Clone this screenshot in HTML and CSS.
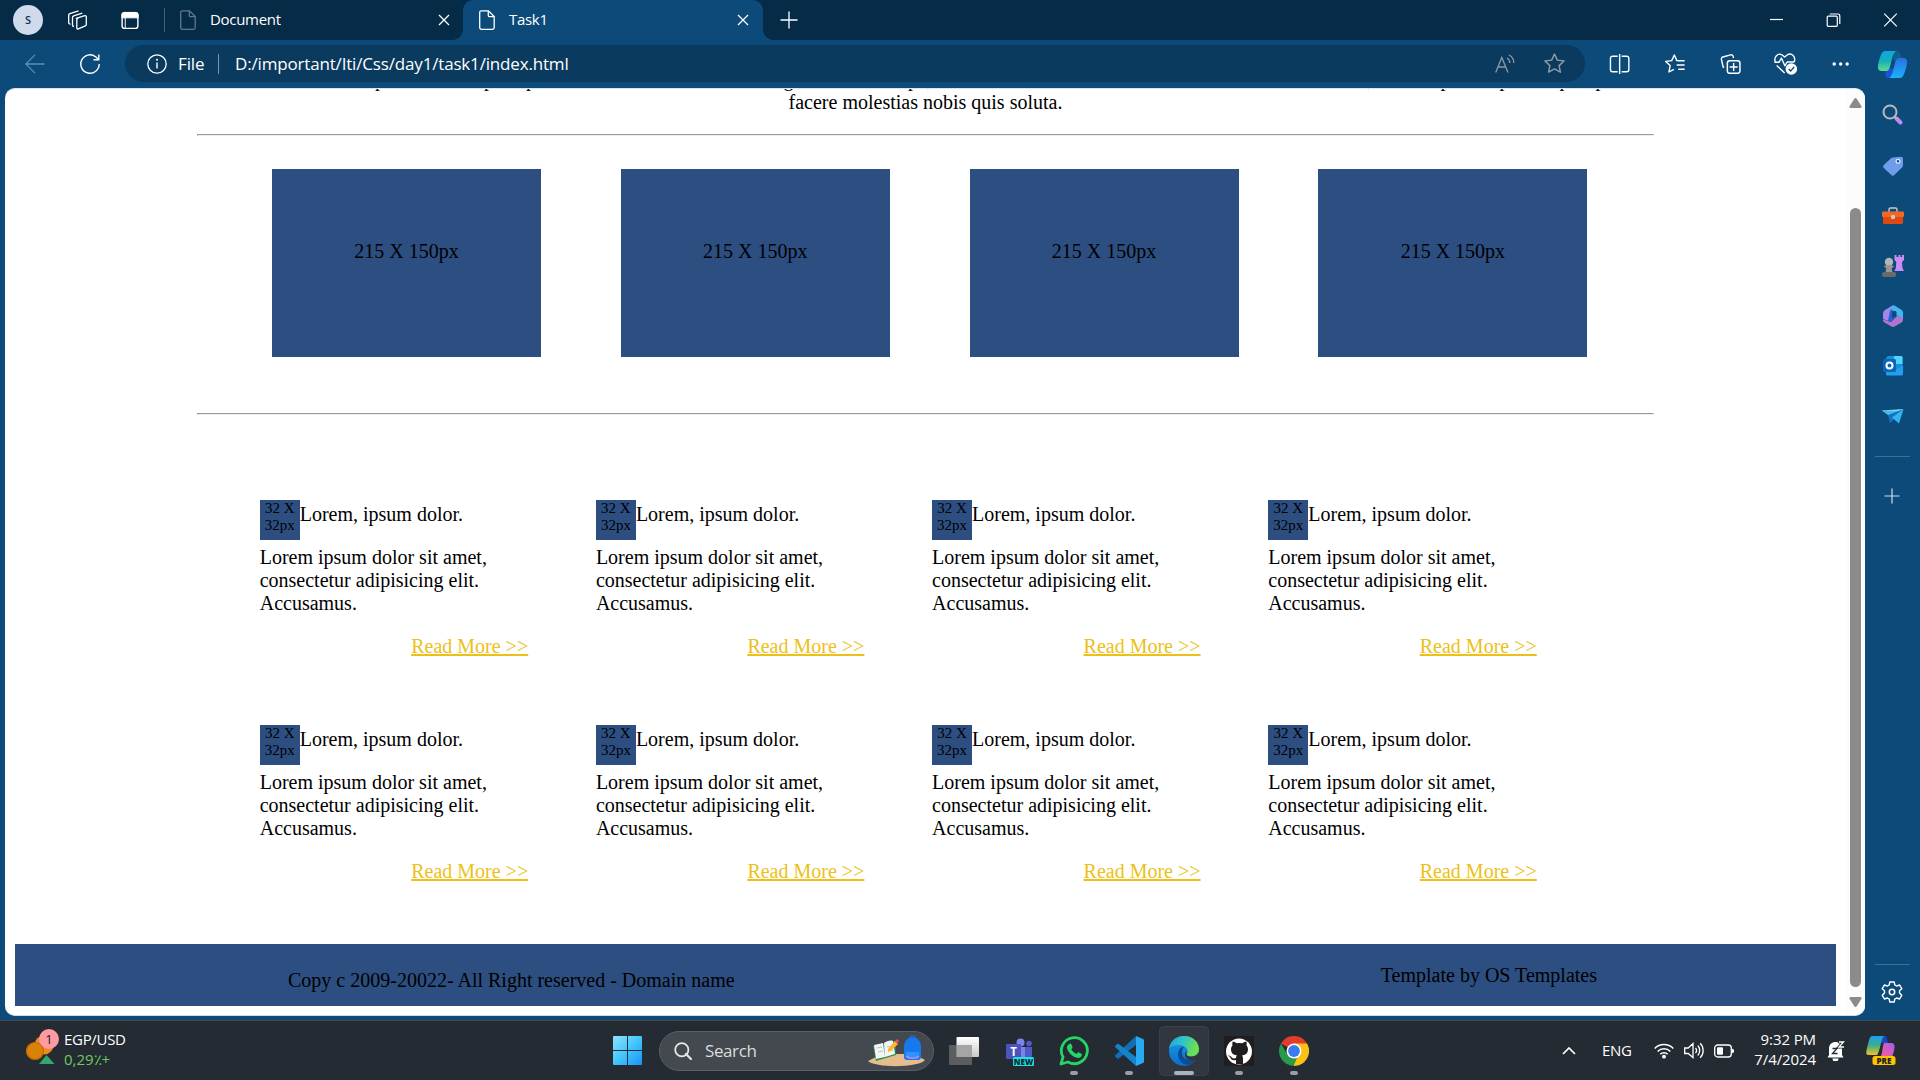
FILE: index.html
```html
<!DOCTYPE html>
<html lang="en">
<head>
<meta charset="utf-8">
<title>Task1</title>
<link rel="stylesheet" href="styles.css">
</head>
<body>
<svg class="defs" width="0" height="0">
  <defs>
    <linearGradient id="cpA" x1="0" y1="0" x2="0" y2="1"><stop offset="0" stop-color="#12a5e6"/><stop offset=".5" stop-color="#15b0b8"/><stop offset="1" stop-color="#5fdc8a"/></linearGradient>
    <linearGradient id="cpB" x1="0" y1="0" x2="0" y2="1"><stop offset="0" stop-color="#2b6fe0"/><stop offset="1" stop-color="#19b4fa"/></linearGradient>
    <linearGradient id="preA" x1="0" y1="0" x2="0" y2="1"><stop offset="0" stop-color="#1b9df0"/><stop offset=".5" stop-color="#3fae8a"/><stop offset="1" stop-color="#f2c220"/></linearGradient>
    <linearGradient id="preB" x1="1" y1="0" x2="0" y2="1"><stop offset="0" stop-color="#a45cf0"/><stop offset="1" stop-color="#ff5f8c"/></linearGradient>
    <linearGradient id="win" x1="0" y1="0" x2="1" y2="1"><stop offset="0" stop-color="#8fe3ff"/><stop offset=".5" stop-color="#44c6fb"/><stop offset="1" stop-color="#1793f8"/></linearGradient>
    <linearGradient id="edA" x1="0" y1="0" x2="1" y2=".3"><stop offset="0" stop-color="#1fa2e0"/><stop offset=".5" stop-color="#31c3c8"/><stop offset="1" stop-color="#6fe04c"/></linearGradient>
    <linearGradient id="edB" x1="0" y1="0" x2="0" y2="1"><stop offset="0" stop-color="#1b9de2"/><stop offset="1" stop-color="#0a6fce"/></linearGradient>
    <linearGradient id="tv" x1="0" y1="0" x2="0" y2="1"><stop offset="0" stop-color="#fff"/><stop offset="1" stop-color="#c9c9c9"/></linearGradient>
    <symbol id="doc" viewBox="0 0 16 20"><path d="M2.5.8h7l5.7 5.7v11a1.8 1.8 0 0 1-1.8 1.8H2.5a1.8 1.8 0 0 1-1.8-1.8V2.6A1.8 1.8 0 0 1 2.500.8zM9.300.8v4.600a1.200 1.200 0 0 0 1.200 1.200h4.500" fill="none" stroke="currentColor" stroke-width="1.300"/></symbol>
    <symbol id="x" viewBox="0 0 12 12"><path d="M1 1l10 10M11 1L1 11" stroke="currentColor" stroke-width="1.300" fill="none"/></symbol>
  </defs>
</svg>

<header class="titlebar">
  <span class="avatar">S</span>
  <svg class="workspaces" viewBox="0 0 20 20"><g fill="none" stroke="currentColor" stroke-width="1.300" stroke-linejoin="round"><path d="M8.800 8.300l8.400-2.600a1.200 1.200 0 0 1 1.600 1.100v7.700a1.500 1.500 0 0 1-1 1.400l-7 3a1 1 0 0 1-1.500-.9V9.800a1.500 1.500 0 0 1 1-1.400z"/><path d="M6.500 16.500a1.500 1.500 0 0 1-1.500-1.400V7.600a1.800 1.800 0 0 1 1.200-1.700l8.600-2.700"/><path d="M3 14a1.500 1.500 0 0 1-1.800-1.400V5.300a1.800 1.800 0 0 1 1.200-1.700L11 .9"/></g></svg>
  <svg class="tabmenu" viewBox="0 0 20 20"><rect x="1.700" y="1.700" width="16.600" height="16.600" rx="2.500" fill="none" stroke="#fff" stroke-width="1.500"/><path d="M1.500 7.200V4a2.500 2.500 0 0 1 2.500-2.500h12A2.500 2.500 0 0 1 18.500 4v3.200zM5 7v11" fill="#fff" stroke="#fff"/></svg>
  <span class="split"></span>
  <div class="tab"><svg class="doc dim"><use href="#doc"/></svg><span class="tab-name">Document</span><svg class="x"><use href="#x"/></svg></div>
  <div class="tab active"><svg class="doc"><use href="#doc"/></svg><span class="tab-name">Task1</span><svg class="x"><use href="#x"/></svg></div>
  <svg class="newtab" viewBox="0 0 18 18"><path d="M9 .5v17M.5 9h17" stroke="#fff" stroke-width="1.300"/></svg>
  <div class="winbtns">
    <svg viewBox="0 0 14 14"><path d="M.5 6.500h13" stroke="#fff" stroke-width="1.200"/></svg>
    <svg viewBox="0 0 14 14"><path d="M.7 4.200a1 1 0 0 1 1-1h8.100a1 1 0 0 1 1 1v8.100a1 1 0 0 1-1 1H1.700a1 1 0 0 1-1-1zM3.300 1h8.200a1.800 1.800 0 0 1 1.800 1.800V11" fill="none" stroke="#fff" stroke-width="1.200"/></svg>
    <svg viewBox="0 0 14 14"><path d="M.7.700l12.600 12.600M13.300.700L.7 13.300" stroke="#fff" stroke-width="1.200"/></svg>
  </div>
</header>

<nav class="toolbar">
  <svg class="back" viewBox="0 0 20 20"><path d="M19.500 10H.8M10 .9L.8 10l9.200 9.100" fill="none" stroke="#5f8fb5" stroke-width="1.300"/></svg>
  <svg class="reload" viewBox="0 0 20 20"><path d="M19.200 10A9.200 9.200 0 1 1 15.600 2.700L18.700 5.500M18.800.5v5.200h-5.300" fill="none" stroke="#fff" stroke-width="1.400"/></svg>
  <div class="address">
    <svg class="info" viewBox="0 0 20 20"><circle cx="10" cy="10" r="9.200" fill="none" stroke="#fff" stroke-width="1.300"/><path d="M10 8.500v6" stroke="#fff" stroke-width="1.400"/><circle cx="10" cy="5.800" r="1" fill="#fff"/></svg>
    <span class="scheme">File</span>
    <span class="bar"></span>
    <span class="url">D:/important/Iti/Css/day1/task1/index.html</span>
    <svg class="aloud" viewBox="0 0 20 20"><path d="M.7 18.500L6.800 3.500l6.200 15M3 13h7.800M12 4c1.800 1 2.800 2.800 2.800 5M14 1c3 1.600 4.800 4.500 4.800 8" fill="none" stroke="#8d9aa5" stroke-width="1.300"/></svg>
    <svg class="star" viewBox="0 0 20 20"><path d="M10 1l2.700 5.800 6.400.8-4.700 4.400 1.200 6.300L10 15.200l-5.600 3.100 1.200-6.300L.9 7.600l6.400-.8z" fill="none" stroke="#8d9aa5" stroke-width="1.400" stroke-linejoin="round"/></svg>
  </div>
  <div class="tools">
    <svg viewBox="0 0 20 20"><path d="M8 2.200H3A2.200 2.200 0 0 0 .8 4.400v11.200A2.200 2.200 0 0 0 3 17.800h5M12 2.200h5a2.200 2.200 0 0 1 2.200 2.200v11.200a2.200 2.200 0 0 1-2.200 2.200h-5M10 0v20" fill="none" stroke="#fff" stroke-width="1.400"/></svg>
    <svg viewBox="0 0 20 20"><path d="M14 6.800l-1.800-.2L9.700 1 7 6.600l-6 .8 4.500 4.200L4.300 18l5-2.700M13 6.800h7M12 11h8M13.500 15.200H20" fill="none" stroke="#fff" stroke-width="1.400" stroke-linejoin="round"/></svg>
    <svg viewBox="0 0 20 20"><path d="M3.500 13.500l-1-.5L.8 5.500A2 2 0 0 1 2.200 3L10 .9a2 2 0 0 1 2.500 1.500l.4 1.600" fill="none" stroke="#fff" stroke-width="1.400"/><rect x="6.700" y="6.700" width="12.600" height="12.600" rx="2.300" fill="none" stroke="#fff" stroke-width="1.500"/><path d="M13 9v8M9 13h8" stroke="#fff" stroke-width="1.400"/></svg>
    <svg class="heart" viewBox="0 0 24 22"><path d="M1.800 9.500C-.5 4 4.500-.6 8.500 2l2.500 2 2.500-2C18-.8 22.500 3.800 20.500 9M3 12.500l8 7.500M.8 9.200h4.700L7.800 5l3.400 7.800 2.300-3.800h7" fill="none" stroke="#fff" stroke-width="1.400" stroke-linejoin="round"/><circle cx="17.700" cy="16" r="5.800" fill="#fff"/><path d="M15 16l2 2 3.500-4" fill="none" stroke="#0c4a7a" stroke-width="1.300"/></svg>
    <svg viewBox="0 0 20 20"><g fill="#fff"><circle cx="3.500" cy="10" r="1.700"/><circle cx="10" cy="10" r="1.700"/><circle cx="16.500" cy="10" r="1.700"/></g></svg>
  </div>
  <svg class="copilot" viewBox="0 0 30 28"><path d="M16 1h4c2 0 3 3 4 7l-8 3z" fill="#0d628c"/><path d="M8 18l9 1-2 5c-1 3-2 4-4 4-3 0-4-5-3-10z" fill="#1c52d6"/><path d="M8 1h10.500c-3.500 2-4 9-5.500 14-1 4-2 6-4.500 6H4.500C-1 21 0 16 2 9 4 3 5 1 8 1z" fill="url(#cpA)"/><path d="M22 28H11.500c3.500-2 4-8 5.500-13 1-4 2-7 4.500-7h4c5.500 0 4.500 5 2.500 12-2 6-3 8-6 8z" fill="url(#cpB)"/></svg>
</nav>

<div class="workspace">
  <div class="viewport">
    <main class="page">
      <div class="cutline"><span>perferendis</span><span>ipsa</span><span>optio</span><span>magni</span><span>culpa,</span><span>rerum,</span><span>ipsa</span><span>porro</span><span>optio</span><span>porro</span></div>
      <p class="intro">facere molestias nobis quis soluta.</p>
      <hr>
      <section class="gallery">
        <div class="box">215 X 150px</div><div class="box">215 X 150px</div><div class="box">215 X 150px</div><div class="box">215 X 150px</div>
      </section>
      <hr>
      <section class="cards">
        <article class="card"><div class="card-head"><span class="thumb">32 X 32px</span><span>Lorem, ipsum dolor.</span></div><p>Lorem ipsum dolor sit amet, consectetur adipisicing elit. Accusamus.</p><a class="more">Read More &gt;&gt;</a></article>
        <article class="card"><div class="card-head"><span class="thumb">32 X 32px</span><span>Lorem, ipsum dolor.</span></div><p>Lorem ipsum dolor sit amet, consectetur adipisicing elit. Accusamus.</p><a class="more">Read More &gt;&gt;</a></article>
        <article class="card"><div class="card-head"><span class="thumb">32 X 32px</span><span>Lorem, ipsum dolor.</span></div><p>Lorem ipsum dolor sit amet, consectetur adipisicing elit. Accusamus.</p><a class="more">Read More &gt;&gt;</a></article>
        <article class="card"><div class="card-head"><span class="thumb">32 X 32px</span><span>Lorem, ipsum dolor.</span></div><p>Lorem ipsum dolor sit amet, consectetur adipisicing elit. Accusamus.</p><a class="more">Read More &gt;&gt;</a></article>
        <article class="card"><div class="card-head"><span class="thumb">32 X 32px</span><span>Lorem, ipsum dolor.</span></div><p>Lorem ipsum dolor sit amet, consectetur adipisicing elit. Accusamus.</p><a class="more">Read More &gt;&gt;</a></article>
        <article class="card"><div class="card-head"><span class="thumb">32 X 32px</span><span>Lorem, ipsum dolor.</span></div><p>Lorem ipsum dolor sit amet, consectetur adipisicing elit. Accusamus.</p><a class="more">Read More &gt;&gt;</a></article>
        <article class="card"><div class="card-head"><span class="thumb">32 X 32px</span><span>Lorem, ipsum dolor.</span></div><p>Lorem ipsum dolor sit amet, consectetur adipisicing elit. Accusamus.</p><a class="more">Read More &gt;&gt;</a></article>
        <article class="card"><div class="card-head"><span class="thumb">32 X 32px</span><span>Lorem, ipsum dolor.</span></div><p>Lorem ipsum dolor sit amet, consectetur adipisicing elit. Accusamus.</p><a class="more">Read More &gt;&gt;</a></article>
      </section>
      <footer class="footer"><span class="copy">Copy c 2009-20022- All Right reserved - Domain name</span><span class="tpl">Template by OS Templates</span></footer>
    </main>
    <div class="scroll">
      <svg viewBox="0 0 13 10"><path d="M5.300.8a1.400 1.400 0 0 1 2.400 0l4.600 7.200a1.200 1.200 0 0 1-1 2H1.700a1.200 1.200 0 0 1-1-2z" fill="#8b8b8b"/></svg>
      <span class="handle"></span>
      <svg viewBox="0 0 13 10"><path d="M5.300 9.200a1.400 1.400 0 0 0 2.400 0l4.600-7.200a1.200 1.200 0 0 0-1-2H1.700a1.200 1.200 0 0 0-1 2z" fill="#8b8b8b"/></svg>
    </div>
  </div>
  <aside class="side">
    <svg class="find" viewBox="0 0 22 22"><path d="M14.500 14.500l4 4" stroke="#c58af0" stroke-width="4" stroke-linecap="round"/><circle cx="8" cy="8" r="6.500" fill="none" stroke="#b9b9b9" stroke-width="2"/><path d="M12.500 12.500l2 2" stroke="#b9b9b9" stroke-width="2"/></svg>
    <svg viewBox="0 0 22 22"><path d="M11 2.500l8-.8a2 2 0 0 1 2 2v6.800a3 3 0 0 1-1 2l-7.500 7.300a2.500 2.500 0 0 1-3.500 0L1.800 13a2 2 0 0 1 0-3L9 3.300a3 3 0 0 1 2-.8z" fill="#6f9ceb"/><circle cx="16" cy="6.300" r="1.900" fill="#134b86" stroke="#d3ecff" stroke-width="1.200"/></svg>
    <svg viewBox="0 0 22 22"><path d="M7 7V4.500A1.500 1.500 0 0 1 8.500 3h5A1.500 1.500 0 0 1 15 4.500V7" fill="none" stroke="#c9c9c9" stroke-width="1.400"/><rect x="1" y="10" width="20" height="9" rx="1.500" fill="#e0480f"/><rect x="0" y="6.500" width="22" height="5.500" rx="1" fill="#f26722"/><circle cx="11" cy="12" r="2.200" fill="#c9c9c9"/></svg>
    <svg viewBox="0 0 22 22"><path d="M12.500 0h2v2h2V0h2v2h1.500V0h2v5l-2 2 .5 6 1.500 3h-9.500l1.300-3 .5-6-1.800-2z" fill="#c78df2"/><circle cx="7" cy="7" r="4.200" fill="#b5b5b5"/><path d="M2 11.500c0-2 10-2 10 0-1 1-2 1-2.300 2l.8 4h-7l.8-4C4 12.500 3 12.500 2 11.500z" fill="#979797"/><rect x="0" y="17" width="14" height="5" rx="2" fill="#6c6a68"/></svg>
    <svg viewBox="0 0 22 22"><path d="M10 .8L3 5a4 4 0 0 0-2 3.500V14l7 2.500V7.500L12 5V.8z" fill="#a585ea"/><path d="M10 .8a3 3 0 0 1 3 0L19 4.500a3.500 3.500 0 0 1 2 3V14l-6.500-3.500V7L8 4z" fill="#43b4ee"/><path d="M21 13v2a3 3 0 0 1-1.500 2.500L13 21.300a4 4 0 0 1-4 0L2.500 17.500A3 3 0 0 1 1 14.500L9 17l6-6z" fill="#b174cf"/><path d="M8 5.500l2-1.500v9l4.500-2.500L9 17l-3-1z" fill="#2c5fd0"/><path d="M10 7.500l4-1.500v5L10 13z" fill="#0c4a7a"/></svg>
    <svg viewBox="0 0 22 22"><path d="M6 1h13a1.500 1.500 0 0 1 1.500 1.500V12L14 16 4 12V3z" fill="#1490df"/><path d="M12 1h7a1.500 1.500 0 0 1 1.500 1.500V9H12z" fill="#4fd3fa"/><path d="M4 12l10 3 7-5v9a1.500 1.500 0 0 1-1.500 1.500h-14A1.500 1.500 0 0 1 4 19z" fill="#1f9fec"/><rect x="1" y="4" width="13" height="13" rx="1.500" fill="#0b65b8"/><circle cx="7.500" cy="10.500" r="3" fill="none" stroke="#fff" stroke-width="2"/></svg>
    <svg viewBox="0 0 22 22"><path d="M0 5.500L21.500 4 9 12z" fill="#7cdcfb"/><path d="M0 5.500L17 6l-9 5z" fill="#43b9ee"/><path d="M6 10l15.500-6L8 18.500z" fill="#1574c0"/><path d="M21.500 4L10 12.500 17 18.500z" fill="#34b3ee"/></svg>
    <span class="rule"></span>
    <svg class="add" viewBox="0 0 16 16"><path d="M8 .5v15M.5 8h15" stroke="#cfdce7" stroke-width="1.200"/></svg>
    <span class="rule low"></span>
    <svg class="gear" viewBox="0 0 22 22"><path d="M8.800 1h4.400l.6 3 1.800 1 3-1 2.200 3.700-2.300 2.100v2.300l2.300 2.100-2.200 3.800-3-1-1.800 1-.6 3H8.800l-.6-3-1.800-1-3 1-2.200-3.800 2.300-2.100V9.800L1.200 7.700 3.400 4l3 1 1.800-1z" fill="none" stroke="#fff" stroke-width="1.400" stroke-linejoin="round"/><circle cx="11" cy="11" r="2.700" fill="none" stroke="#fff" stroke-width="1.500"/></svg>
  </aside>
</div>

<div class="taskbar">
  <svg class="coins" viewBox="0 0 33 36"><circle cx="18" cy="16" r="9.500" fill="#f08a1c"/><circle cx="9" cy="22" r="8.500" fill="#d98207" stroke="#c56505" stroke-width="1.200"/><path d="M20.500 26l8 9h-15.500z" fill="#34a56b"/><circle cx="23" cy="10" r="10" fill="#ff9aa2"/><text x="23" y="14.500" text-anchor="middle" font-size="13" fill="#222">1</text></svg>
  <div class="rate"><span>EGP/USD</span><span class="up">0,29٪+</span></div>
  <svg class="start" viewBox="0 0 29 29"><path d="M0 1a1 1 0 0 1 1-1h13v14H0zM15 0h13a1 1 0 0 1 1 1v13H15zM0 15h14v14H1a1 1 0 0 1-1-1zM15 15h14v13a1 1 0 0 1-1 1H15z" fill="url(#win)"/></svg>
  <div class="search">
    <svg class="glass" viewBox="0 0 18 18"><path d="M12 12l5 5" stroke="#e6e6e6" stroke-width="2.200" stroke-linecap="round"/><circle cx="7.800" cy="7.800" r="6.600" fill="none" stroke="#e6e6e6" stroke-width="1.800"/></svg>
    <span>Search</span>
    <svg class="art" viewBox="0 0 57 32"><path d="M0 26l14-7h32l11 6c-6 8-50 8-57 1z" fill="#e5bd8c"/><path d="M5 11l22-5 1 14-20 6z" fill="#2f8f56"/><path d="M6 10l9-2 2 14-9 2zM16 8c3-2 6-3 9-2l2 13-10 3z" fill="#f4f4f4"/><path d="M9 13l5-1M10 17l5-1M19 12l5-1M20 16l5-1" stroke="#b3c9b8"/><path d="M20 14l7-8 3 3-7 7-3 1z" fill="#ffb62c"/><path d="M27 6l2-2 2 2-2 3z" fill="#ef5350"/><path d="M42 3c0-3 5-3 5 0" fill="none" stroke="#1668c9" stroke-width="1.500"/><path d="M36 12c0-13 17-13 17 0v10a3 3 0 0 1-3 3H39a3 3 0 0 1-3-3z" fill="#1679ee"/><path d="M38 17h13v4a3 3 0 0 1-3 3h-7a3 3 0 0 1-3-3z" fill="#3192ff"/><path d="M38 21c3 3 10 3 13 0" fill="none" stroke="#c48bf2" stroke-width="1.500"/></svg>
  </div>
  <div class="apps">
    <span class="app"><svg viewBox="0 0 30 30"><rect x="7.500" y="1" width="22.500" height="20" rx="1" fill="url(#tv)"/><rect x="0" y="9" width="23" height="20" rx="1" fill="#6a6a6a" fill-opacity=".8"/><rect x="7.500" y="9" width="15.500" height="12" fill="#a5a5a5"/></svg></span>
    <span class="app teams"><svg viewBox="0 0 30 30"><circle cx="15.500" cy="6.500" r="4" fill="#7b83eb"/><circle cx="24" cy="7.500" r="2.800" fill="#5059c9"/><path d="M9 11h13v14c-7 3-13 0-13-5z" fill="#7b83eb"/><path d="M20 11h7v8c0 3-3 4-7 3z" fill="#5059c9"/><rect x="1" y="8" width="15" height="15" rx="1.200" fill="#4b53bc"/><text x="8.500" y="19.500" text-anchor="middle" font-size="11.500" font-weight="700" fill="#fff">T</text><rect x="8" y="21" width="21" height="9" rx="1.500" fill="#21e0e4"/><text x="18.500" y="28.500" text-anchor="middle" font-size="8" font-weight="800" fill="#08272b">NEW</text></svg></span>
    <span class="app run"><svg viewBox="0 0 30 30"><path d="M2 28l2-7A13 13 0 1 1 9 26z" fill="none" stroke="#25d366" stroke-width="2.800" stroke-linejoin="round"/><path d="M10 8c1-1 2-.5 2.500.5l1 2.500c.2.800-.8 1.700-1.200 2.300 1.200 2.300 3 3.700 5.200 4.600.6-.6 1.300-1.900 2-1.700l3 1.500c.8.400.5 2.500-1 3.500-2 1.400-5 .5-8-1.500-3-2.200-5.500-5.500-5.500-8 0-1.500.8-2.900 2-3.700z" fill="#25d366"/></svg></span>
    <span class="app run"><svg viewBox="0 0 30 30"><path d="M22 0v9L4 23l-3-2.500v-1z" fill="#1070b3"/><path d="M1 10l3-2.500L22 21v9L1 11z" fill="#1583cc"/><path d="M22 0l7 3a2 2 0 0 1 1 1.500v21a2 2 0 0 1-1 1.500l-7 3z" fill="#29a9f2"/></svg></span>
    <span class="app run current"><svg viewBox="0 0 30 30"><circle cx="15" cy="15" r="15" fill="url(#edB)"/><path d="M0 13C1 5 7 0 15 0c9 0 15 6 15 13 0 5-4 7.500-8 7.500-3 0-5-1.200-4.300-2.500C21 14 16 9 10.500 9 5 9 1 11 0 13z" fill="url(#edA)"/><path d="M13 11c-6 3-5 14 2 17 5 2 10-1 13-5-5 3-15 1-15-6 0-2 0-4 2-6z" fill="#0f4a94"/><path d="M17.500 17.500c-.8 1.500 1.500 3 4.500 3 3.500 0 6.500-1.500 8-4.500v7l-2.500 1c-6 2-11.500-1-11.500-5.500 0-1.500.5-2.500 1.800-3z" fill="#32373f"/></svg></span>
    <span class="app run"><svg viewBox="0 0 30 30"><path d="M0 0h30v30H0z" fill="#211c1d"/><circle cx="15" cy="15.500" r="13" fill="#fff"/><path d="M12 28v-4c-4 1-5-1-6-3l-2-1.500c2-.5 3 1 4 2 1 1.500 3 1 4 .5 0-1 .5-2 1-2.500-4-.5-6-2.500-6-6 0-2 .5-3 1.500-4-.3-1-.3-3 .3-4 1 0 3 1 4 1.700a13 13 0 0 1 5.500 0c1-.7 3-1.700 4-1.700.5 1 .5 3 .2 4 1 1 1.500 2.500 1.500 4 0 3.500-2 5.500-6 6 .7.700 1 2 1 3v5.500z" fill="#211c1d"/></svg></span>
    <span class="app run"><svg viewBox="0 0 30 30"><path d="M15 15L2 7.500A15 15 0 0 1 28 7.500z" fill="#e33b2e"/><path d="M15 7.500h13A15 15 0 0 1 15 30z" fill="#fbc116"/><path d="M2 7.500l6.500 11.200L15 22l3 0-3.500 8A15 15 0 0 1 2 7.500z" fill="#289a4a"/><circle cx="15" cy="15" r="7.500" fill="#fff"/><circle cx="15" cy="15" r="5.900" fill="#3a7cf0"/></svg></span>
  </div>
  <div class="tray">
    <svg class="chev" viewBox="0 0 14 8"><path d="M1 7l6-6 6 6" fill="none" stroke="#fff" stroke-width="1.700"/></svg>
    <span class="lang">ENG</span>
    <svg class="net" viewBox="0 0 20 17"><path d="M.7 6.500a13 13 0 0 1 18.600 0M3.600 9.500a9 9 0 0 1 12.800 0M6.300 12.200a5.200 5.200 0 0 1 7.400 0" fill="none" stroke="#fff" stroke-width="1.500"/><circle cx="10" cy="14.700" r="1.900" fill="#fff"/></svg>
    <svg class="vol" viewBox="0 0 20 17"><path d="M.7 6h3.500L9 1.500v14L4.200 11.500H.7zM11.500 6a4 4 0 0 1 0 5.200M13.800 3.500a7.500 7.500 0 0 1 0 10M16.200 1.200a10.500 10.500 0 0 1 0 14.600" fill="none" stroke="#fff" stroke-width="1.300"/></svg>
    <svg class="bat" viewBox="0 0 20 14"><rect x=".7" y="1" width="16.600" height="12" rx="3" fill="none" stroke="#fff" stroke-width="1.300"/><rect x="3" y="3.300" width="6" height="7.400" rx="1" fill="#fff"/><path d="M18 5l2 1v2l-2 1z" fill="#fff" stroke="#fff" stroke-width=".5"/></svg>
    <div class="clock"><span>9:32 PM</span><span>7/4/2024</span></div>
    <svg class="bell" viewBox="0 0 18 20"><path d="M2 14V8C2 3 5 1 8.500 1S15 3 15 8v6l1.500 2.500H.5zM5.500 17.500h6a3 3 0 0 1-6 0z" fill="#fff"/><path d="M5.500 7.500h4.500l-4.500 5h5" stroke="#242b33" fill="none" stroke-width="1.300"/><path d="M11.500 1h5l-4.500 5h5" fill="none" stroke="#242b33" stroke-width="3"/><path d="M12 1h4.500L12 6h5" fill="none" stroke="#fff" stroke-width="1.300"/></svg>
    <svg class="pre" viewBox="0 0 30 29"><path d="M14 0h5c2 0 2 3 3 7h-7z" fill="#1b43c8"/><path d="M7 0h11c-3 2-4 16-7 19H3c-4 0-3-3-1-11C4 1 4 0 7 0z" fill="url(#preA)"/><path d="M18 7h7c4 0 4 3 3 8l-2 6H14c3-2 2-11 4-14z" fill="url(#preB)"/><rect x="6.500" y="20" width="23" height="9" rx="2.500" fill="#fdc500"/><text x="18" y="27.500" text-anchor="middle" font-size="8" font-weight="800" fill="#222">PRE</text></svg>
  </div>
</div>
</body>
</html>
```
FILE: styles.css
```css
* { box-sizing: border-box; }
body {
  margin: 0;
  width: 1920px;
  height: 1080px;
  overflow: hidden;
  display: flex;
  flex-direction: column;
  background: #0c4a7a;
  color: #fff;
  font-family: "Open Sans", "Noto Sans", sans-serif;
}
svg { display: block; flex: none; }
.defs { position: absolute; }

/* title bar */
.titlebar {
  height: 40px;
  flex: none;
  display: flex;
  align-items: center;
  padding-left: 13px;
  background: #062b47;
}
.avatar {
  width: 30px;
  height: 30px;
  border-radius: 50%;
  background: #cfdbec;
  color: #16304f;
  font-size: 11px;
  font-weight: 600;
  line-height: 30px;
  text-align: center;
}
.workspaces { width: 21px; height: 20px; margin-left: 24px; }
.tabmenu { width: 20px; height: 19px; margin-left: 32px; }
.split { width: 1px; height: 24px; margin-left: 24px; background: #44617a; }
.tab {
  width: 298px;
  height: 40px;
  display: flex;
  align-items: center;
  padding: 0 13px 0 15px;
  font-size: 15px;
}
.tab.active {
  width: 300px;
  padding: 0 14px 0 16px;
  background: #0c4a7a;
  border-radius: 10px 10px 0 0;
  position: relative;
}
.tab.active::before, .tab.active::after {
  content: "";
  position: absolute;
  bottom: 0;
  width: 10px;
  height: 10px;
}
.tab.active::before { left: -10px; background: radial-gradient(circle at 0 0, #062b47 9.5px, #0c4a7a 10px); }
.tab.active::after { right: -10px; background: radial-gradient(circle at 100% 0, #062b47 9.5px, #0c4a7a 10px); }
.doc { width: 16px; height: 20px; margin-right: 14px; }
.dim { color: #60788d; }
.tab-name { flex: 1; letter-spacing: -0.3px; line-height: 38px; height: 40px; }
.x { width: 12px; height: 12px; }
.newtab { width: 18px; height: 18px; margin-left: 17px; }
.winbtns { margin: 0 1px 0 auto; display: flex; }
.winbtns svg { width: 57px; height: 14px; }

/* toolbar */
.toolbar {
  height: 48px;
  flex: none;
  display: flex;
  align-items: center;
  padding: 0 0 1px 25px;
}
.back { width: 20px; height: 20px; }
.reload { width: 20px; height: 20px; margin-left: 35px; }
.address {
  width: 1460px;
  height: 37px;
  margin-left: 25px;
  display: flex;
  align-items: center;
  padding: 0 20px 0 22px;
  border-radius: 19px;
  background: #0a3a5e;
  font-size: 17px;
}
.info { width: 20px; height: 20px; margin-right: 11px; }
.scheme { width: 40px; letter-spacing: -0.1px; }
.bar { width: 1px; height: 20px; background: #7d96aa; margin-right: 16px; }
.url { flex: 1; letter-spacing: -0.17px; }
.aloud { width: 20px; height: 20px; }
.star { width: 21px; height: 21px; margin-left: 29px; }
.tools { display: flex; align-items: center; margin-left: 7px; }
.tools svg { width: 55.3px; height: 20px; }
.tools .heart { height: 22px; }
.copilot { width: 31px; height: 28px; margin-left: 9px; }

/* browser body */
.workspace { flex: 1; display: flex; padding-left: 5px; }
.viewport {
  width: 1860px;
  height: 928px;
  display: flex;
  background: #fff;
  border-radius: 10px;
  overflow: hidden;
  border-top: 1px solid #dbe5ee;
  border-bottom: 1px solid #cfdce6;
}
.page {
  width: 1841px;
  padding: 0 10px;
  color: #000;
  font-family: "Liberation Serif", serif;
  font-size: 20px;
  line-height: 23px;
}
/* last visible pixels of the paragraph line scrolled under the toolbar */
.cutline {
  height: 2px;
  overflow: hidden;
  display: grid;
  grid-template-rows: 2px;
  align-items: end;
  padding-left: 360px;
  grid-template-columns: 103.500px 37.500px 243px 124.500px 436px 115.500px 64.500px 50px 46px 50px;
}
.cutline span { white-space: nowrap; height: 23px; }
.intro { margin: 0; text-align: center; }
.page hr {
  width: 1457px;
  margin: 20px auto 33px;
}
.gallery {
  display: grid;
  grid-template-columns: repeat(4, 269px);
  column-gap: 79.800px;
  margin-left: 257px;
}
.box {
  height: 188px;
  padding-top: 71px;
  background: #2c4e80;
  text-align: center;
}
.gallery + hr { margin: 56px auto 85px; }
.cards {
  display: grid;
  grid-template-columns: repeat(4, 268.500px);
  column-gap: 67.700px;
  row-gap: 66px;
  margin-left: 244.700px;
}
.card { height: 159px; display: flex; flex-direction: column; }
.card-head { display: flex; height: 40px; line-height: 29px; }
.thumb {
  width: 40px;
  height: 40px;
  background: #2c4e80;
  font-size: 15px;
  line-height: 17px;
  text-align: center;
}
.card p { margin: 6px 0 20px; width: 250px; }
.more { align-self: flex-end; color: #eebf16; text-decoration: underline; }
.footer {
  height: 62px;
  margin-top: 60px;
  padding: 0 239px 0 273px;
  display: flex;
  justify-content: space-between;
  background: #2c4e80;
}
.copy { padding-top: 25px; }
.tpl { padding-top: 20px; }
.scroll {
  width: 19px;
  padding: 9px 0 8px;
  display: flex;
  flex-direction: column;
  align-items: center;
  background: #fcfcfc;
}
.scroll svg { width: 13px; height: 10px; }
.handle { width: 11px; height: 779px; margin: 100px 0 10px; border-radius: 6px; background: #8b8b8b; }

.side {
  width: 55px;
  display: flex;
  flex-direction: column;
  align-items: center;
  padding-top: 16px;
}
.side svg { width: 22px; height: 22px; margin-bottom: 28px; }
.side .find { margin-bottom: 29px; }
.rule { width: 35px; height: 1px; margin: 1px 0 31px; background: #3f7099; }
.side .add { width: 16px; height: 16px; margin: 0 1px 460px 0; }
.rule.low { margin: 0 0 16px; }
.side .gear { margin: 0 1px 0 0; }

/* taskbar */
.taskbar {
  height: 60px;
  flex: none;
  display: flex;
  align-items: center;
  border-top: 1px solid #45494e;
  background: #242b33;
}
.coins { width: 33px; height: 36px; margin: -7px 0 0 26px; }
.rate { width: 549px; margin-top: -4px; padding-left: 5px; display: flex; flex-direction: column; font-size: 15px; line-height: 20px; letter-spacing: -0.3px; }
.up { color: #6ccb5f; }
.start { width: 29px; height: 29px; margin-left: 5px; }
.search {
  width: 275px;
  height: 40px;
  margin-left: 17px;
  padding: 0 8px 0 14px;
  display: flex;
  align-items: center;
  border: 1px solid #595f66;
  border-radius: 20px;
  background: #44494f;
  color: #dcdcdc;
  font-size: 17px;
  letter-spacing: -0.4px;
}
.glass { width: 18px; height: 18px; margin-right: 13px; }
.art { width: 57px; height: 32px; margin-left: auto; }
.apps { display: flex; height: 50px; margin-left: 5px; gap: 5px; }
.app {
  width: 50px;
  height: 50px;
  display: flex;
  flex-direction: column;
  align-items: center;
  justify-content: space-between;
  padding: 10px 0 1px;
  border-radius: 5px;
}
.app svg { width: 30px; height: 30px; }
.teams { padding-left: 1px; }
.run::after { content: ""; width: 8px; height: 4px; border-radius: 2px; background: #9a9da1; }
.current { background: #32373f; outline: 1px solid #3b4047; outline-offset: -1px; }
.current::after { width: 20px; background: #a5b4bf; }
.tray { flex: 1; display: flex; align-items: center; padding-left: 243px; font-size: 15px; }
.chev { width: 14px; height: 8px; }
.lang { width: 52px; margin: -2px 0 0 26px; letter-spacing: -0.3px; }
.net { width: 20px; height: 17px; }
.vol { width: 20px; height: 17px; margin-left: 10px; }
.bat { width: 20px; height: 14px; margin-left: 10px; }
.clock { width: 82px; margin-top: -3px; display: flex; flex-direction: column; text-align: right; line-height: 20px; letter-spacing: -0.1px; }
.bell { width: 18px; height: 20px; margin-left: 11px; }
.pre { width: 30px; height: 29px; margin-left: 21px; }
```
